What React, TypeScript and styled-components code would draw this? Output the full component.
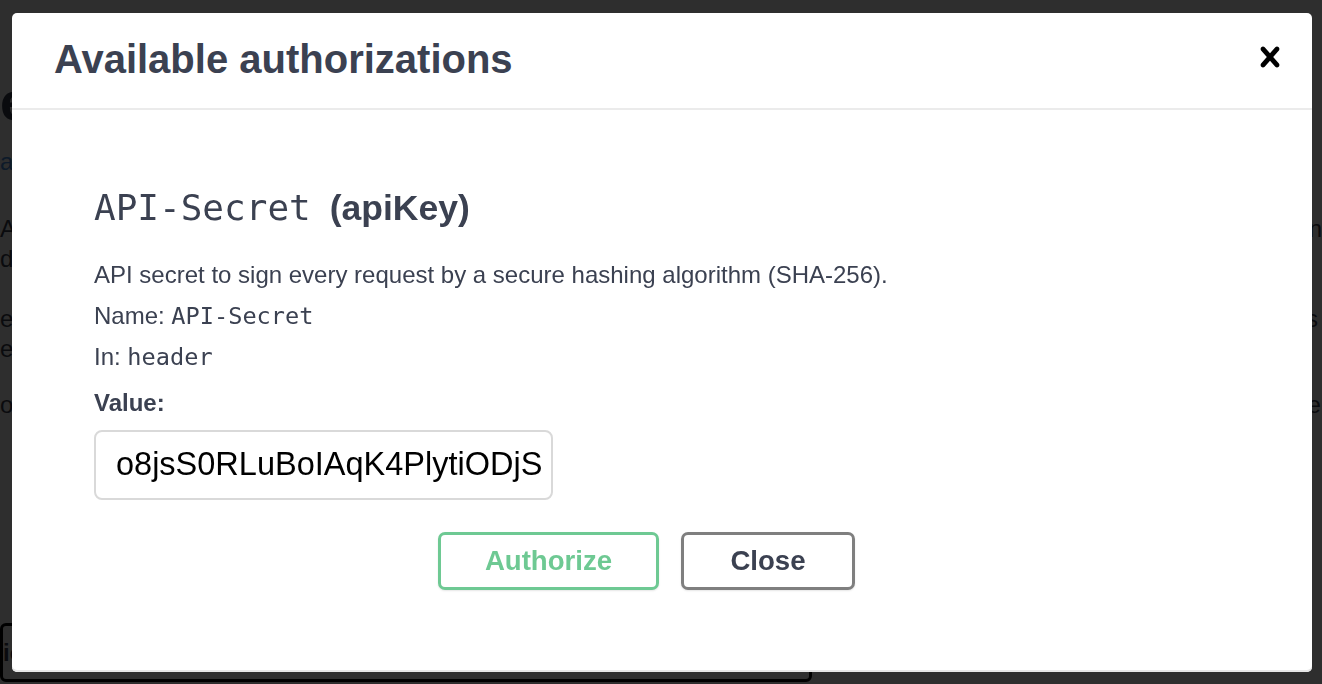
import styled, { createGlobalStyle } from 'styled-components';

const GlobalStyle = createGlobalStyle`
    * {
        box-sizing: border-box;
    }
    html,
    body {
        margin: 0;
        padding: 0;
    }
    body {
        font-family: 'Liberation Sans', Arial, sans-serif;
        background: #fff;
        overflow: hidden;
    }
`;

// Page that sits behind the modal, only its edges show through the backdrop
const Page = styled.div`
    height: 684px;
    overflow: hidden;
    color: #3b4151;
    padding-top: 71px;
`;
const PageHeading = styled.h2`
    margin: 0;
    font-size: 54px;
    line-height: 60px;
    font-weight: 700;
    white-space: nowrap;
`;
const PageLink = styled.a`
    display: block;
    margin-top: 16px;
    font-size: 24px;
    line-height: 30px;
    color: #4990e2;
    text-decoration: none;
`;
const PageParagraph = styled.div<{ $gap: number }>`
    margin-top: ${({ $gap }) => $gap}px;
    font-size: 24px;
    line-height: 30px;
`;
const PageLine = styled.div`
    white-space: nowrap;
`;
const PageBox = styled.div`
    margin-top: 203px;
    width: 812px;
    height: 59px;
    border: 3px solid #000;
    border-radius: 6px;
    font-size: 24px;
    font-weight: 700;
    line-height: 53px;
`;

const Backdrop = styled.div`
    position: fixed;
    inset: 0;
    background: rgba(0, 0, 0, 0.82);
    display: flex;
    align-items: center;
    justify-content: center;
    padding-left: 2px;
`;
const Modal = styled.div`
    width: 1300px;
    background: #fff;
    border-radius: 5px;
    box-shadow: inset 0 -2px 0 #e6e6e6;
    color: #3b4151;
    display: flex;
    flex-direction: column;
`;
const Header = styled.div`
    height: 97px;
    border-bottom: 2px solid #ebebeb;
    display: flex;
    align-items: center;
    justify-content: space-between;
    padding: 0 22px 3px 42px;
`;
const Title = styled.h3`
    margin: 0;
    font-size: 40px;
    line-height: 40px;
    font-weight: 700;
`;
const CloseIcon = styled.button`
    all: unset;
    display: flex;
    width: 40px;
    height: 40px;
    margin-top: -3px;
    cursor: pointer;
`;
const Body = styled.div`
    display: flex;
    flex-direction: column;
    padding: 77px 82px 82px;
`;
const AuthTitle = styled.h4`
    margin: 0;
    font-size: 35.5px;
    line-height: 42px;
    font-weight: 700;
    code {
        margin-right: 19px;
    }
`;
const Mono = styled.code<{ $size: number }>`
    font-family: 'DejaVu Sans Mono', 'Liberation Mono', monospace;
    font-weight: 400;
    font-size: ${({ $size }) => $size}px;
`;
const Text = styled.div<{ $gap: number; $bold?: boolean }>`
    margin-top: ${({ $gap }) => $gap}px;
    font-size: 24px;
    line-height: 28px;
    font-weight: ${({ $bold }) => ($bold ? 700 : 400)};
`;
const ValueInput = styled.input`
    margin-top: 13px;
    width: 459px;
    height: 70px;
    border: 2px solid #d9d9d9;
    border-radius: 8px;
    padding: 0 2px 0 20px;
    font-family: 'Liberation Sans', Arial, sans-serif;
    font-size: 32.5px;
    color: #000;
    background: #fff;
    outline: none;
`;
const ButtonRow = styled.div`
    margin-top: 32px;
    display: flex;
    justify-content: center;
    gap: 22px;
    padding-right: 31px;
`;
const Button = styled.button<{ $variant: 'authorize' | 'close' }>`
    height: 58px;
    width: ${({ $variant }) => ($variant === 'authorize' ? 221 : 174)}px;
    border: 3px solid
        ${({ $variant }) => ($variant === 'authorize' ? '#6ec993' : '#7f7f7f')};
    color: ${({ $variant }) => ($variant === 'authorize' ? '#6ec993' : '#3b4151')};
    border-radius: 7px;
    background: #fff;
    box-shadow: 0 1px 2px rgba(0, 0, 0, 0.1);
    font-family: 'Liberation Sans', Arial, sans-serif;
    font-size: 27.6px;
    font-weight: 700;
    padding: 0;
    cursor: pointer;
`;

const App = function () {
    return (
        <>
            <GlobalStyle />
            <Page>
                <PageHeading>e Exchange REST API</PageHeading>
                <PageLink href="#">api/v1/swagger.json</PageLink>
                <PageParagraph $gap={37}>
                    <PageLine>
                        All private requests must carry an API key and a signature calculated over the request body with the secret so the server can verify that the request is authentic and untouched
                    </PageLine>
                    <PageLine>data is sent as JSON.</PageLine>
                </PageParagraph>
                <PageParagraph $gap={30}>
                    <PageLine>
                        every response contains a timestamp and a request id that should be kept for support cases and for matching asynchronous results to their original requests
                    </PageLine>
                    <PageLine>errors use standard codes.</PageLine>
                </PageParagraph>
                <PageParagraph $gap={26}>
                    <PageLine>
                        ou can try every endpoint from this page after you authorize with your key and secret using the button on the right side of the page header and the links under https://
                    </PageLine>
                </PageParagraph>
                <PageBox>ic</PageBox>
            </Page>
            <Backdrop>
                <Modal>
                    <Header>
                        <Title>Available authorizations</Title>
                        <CloseIcon type="button" title="Close">
                            <svg width="40" height="40" viewBox="0 0 20 20">
                                <path
                                    fill="#000"
                                    d="M14.348 14.849c-.469.469-1.229.469-1.697 0L10 11.819l-2.651 3.029c-.469.469-1.229.469-1.697 0-.469-.469-.469-1.229 0-1.697l2.758-3.15-2.759-3.152c-.469-.469-.469-1.228 0-1.697.469-.469 1.228-.469 1.697 0L10 8.183l2.651-3.031c.469-.469 1.228-.469 1.697 0 .469.469.469 1.229 0 1.697l-2.758 3.152 2.758 3.15c.469.469.469 1.229 0 1.698z"
                                />
                            </svg>
                        </CloseIcon>
                    </Header>
                    <Body>
                        <AuthTitle>
                            <Mono $size={36}>API-Secret</Mono>(apiKey)
                        </AuthTitle>
                        <Text $gap={32}>
                            API secret to sign every request by a secure hashing algorithm (SHA-256).
                        </Text>
                        <Text $gap={13}>
                            Name: <Mono $size={23.6}>API-Secret</Mono>
                        </Text>
                        <Text $gap={13}>
                            In: <Mono $size={23.6}>header</Mono>
                        </Text>
                        <Text $gap={18} $bold>
                            Value:
                        </Text>
                        <ValueInput type="text" defaultValue="o8jsS0RLuBoIAqK4PlytiODjS" />
                        <ButtonRow>
                            <Button type="button" $variant="authorize">
                                Authorize
                            </Button>
                            <Button type="button" $variant="close">
                                Close
                            </Button>
                        </ButtonRow>
                    </Body>
                </Modal>
            </Backdrop>
        </>
    );
};

export default App;
